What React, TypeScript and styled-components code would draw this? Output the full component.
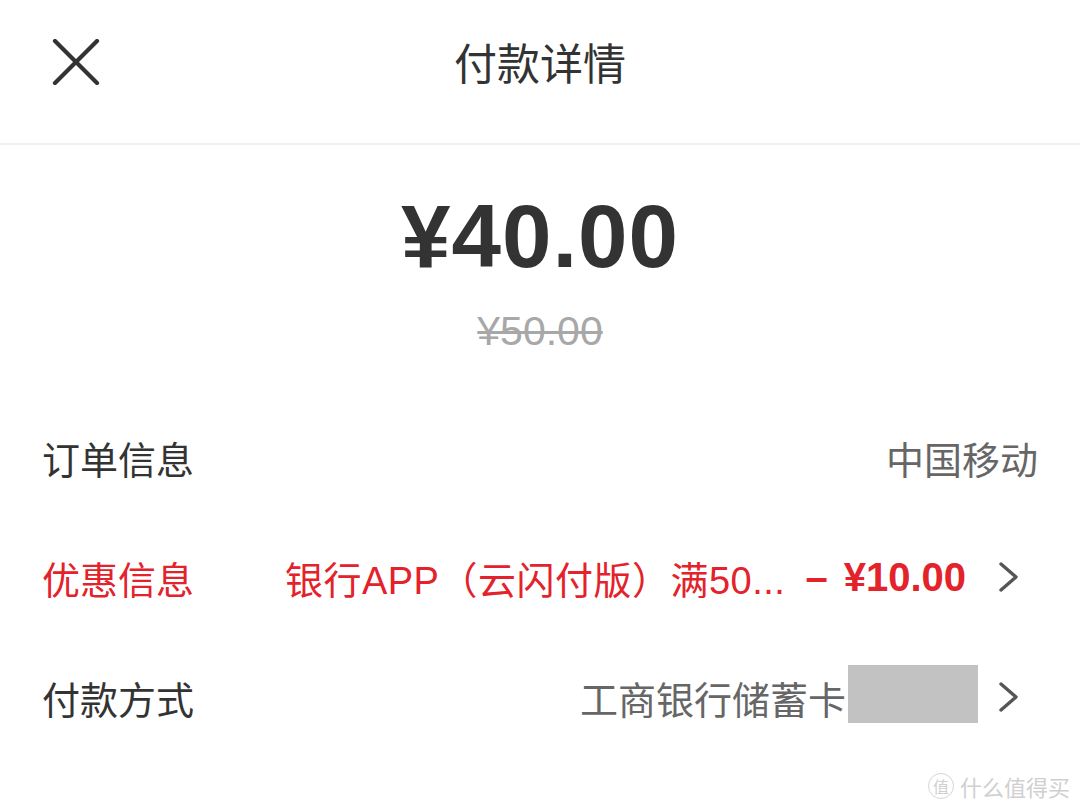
import React from 'react';
import styled, { createGlobalStyle } from 'styled-components';

const GlobalStyle = createGlobalStyle`
  html, body {
    margin: 0;
    padding: 0;
    background: #ffffff;
  }
  body {
    font-family: "Liberation Sans", "Noto Sans CJK SC", sans-serif;
    color: #333333;
  }
`;

const CloseIcon = () => (
  <svg width="48" height="46" viewBox="0 0 48 46" fill="none">
    <path d="M3 2 L45 44 M45 2 L3 44" stroke="#333" strokeWidth="4.2" strokeLinecap="round" />
  </svg>
);

const ChevronIcon = () => (
  <svg width="22" height="30" viewBox="0 0 22 30" fill="none">
    <path d="M3 2 L18 15 L3 28" stroke="#555" strokeWidth="3.4" strokeLinecap="round" strokeLinejoin="round" />
  </svg>
);

const App = () => (
  <Page>
    <GlobalStyle />
    <Header>
      <CloseButton>
        <CloseIcon />
      </CloseButton>
      <Title>付款详情</Title>
      <span />
    </Header>

    <AmountBlock>
      <Amount>¥40.00</Amount>
      <OriginalAmount>¥50.00</OriginalAmount>
    </AmountBlock>

    <List>
      <InfoRow>
        <Label>订单信息</Label>
        <Value>中国移动</Value>
      </InfoRow>
      <InfoRow>
        <Label accent>优惠信息</Label>
        <Value accent>银行APP（云闪付版）满50...</Value>
        <Discount>
          <Dash>–</Dash>¥10.00
        </Discount>
        <Chevron>
          <ChevronIcon />
        </Chevron>
      </InfoRow>
      <InfoRow>
        <Label>付款方式</Label>
        <Value>工商银行储蓄卡</Value>
        <MaskedCard />
        <Chevron>
          <ChevronIcon />
        </Chevron>
      </InfoRow>
    </List>

    <Watermark>
      <WatermarkBadge>值</WatermarkBadge>
      什么值得买
    </Watermark>
  </Page>
);

export default App;

const Page = styled.div`
  position: relative;
  width: 1080px;
  height: 810px;
  overflow: hidden;
  background: #ffffff;
`;

const Header = styled.header`
  display: grid;
  grid-template-columns: 1fr auto 1fr;
  align-items: center;
  box-sizing: border-box;
  height: 145px;
  padding-bottom: 20px;
  border-bottom: 2px solid #f1f1f1;
`;

const CloseButton = styled.div`
  display: flex;
  align-items: center;
  padding-left: 52px;
`;

const Title = styled.h1`
  margin: 0;
  font-family: "Noto Sans CJK SC", sans-serif;
  font-size: 43px;
  font-weight: 400;
  line-height: 1;
  color: #333333;
`;

const AmountBlock = styled.div`
  display: flex;
  flex-direction: column;
  align-items: center;
  padding-top: 47px;
`;

const Amount = styled.div`
  font-size: 89px;
  font-weight: 700;
  line-height: 89px;
  color: #333333;
  letter-spacing: 1px;
`;

const OriginalAmount = styled.div`
  margin-top: 30px;
  font-size: 41px;
  line-height: 41px;
  color: #a8a8a8;
  text-decoration: line-through;
  text-decoration-thickness: 3px;
`;

const List = styled.div`
  display: flex;
  flex-direction: column;
  margin-top: 45px;
  padding: 0 42px;
`;

const InfoRow = styled.div`
  display: flex;
  align-items: center;
  height: 120px;
`;

const Label = styled.div<{ accent?: boolean }>`
  flex: 1;
  font-size: 38px;
  color: ${(p) => (p.accent ? '#e3222b' : '#333333')};
`;

const Value = styled.div<{ accent?: boolean }>`
  font-size: 38px;
  letter-spacing: ${(p) => (p.accent ? '0.5px' : '0')};
  color: ${(p) => (p.accent ? '#e3222b' : '#666666')};
  white-space: nowrap;
`;

const Discount = styled.div`
  display: flex;
  align-items: center;
  margin-left: 20px;
  margin-right: 12px;
  font-size: 40px;
  font-weight: 700;
  color: #e3222b;
  white-space: nowrap;
`;

const Dash = styled.span`
  margin-right: 16px;
`;

const MaskedCard = styled.div`
  width: 130px;
  height: 58px;
  margin-left: 2px;
  margin-bottom: 6px;
  background: #c2c2c2;
`;

const Chevron = styled.div`
  display: flex;
  align-items: center;
  margin-left: 20px;
  margin-right: 18px;
`;

const Watermark = styled.div`
  position: absolute;
  right: 10px;
  bottom: 8px;
  display: flex;
  align-items: center;
  gap: 6px;
  font-family: "Noto Sans CJK SC", sans-serif;
  font-size: 22px;
  color: #d0d0d0;
`;

const WatermarkBadge = styled.span`
  display: inline-flex;
  align-items: center;
  justify-content: center;
  width: 24px;
  height: 24px;
  border: 1px solid #d6d6d6;
  border-radius: 50%;
  font-size: 16px;
`;
